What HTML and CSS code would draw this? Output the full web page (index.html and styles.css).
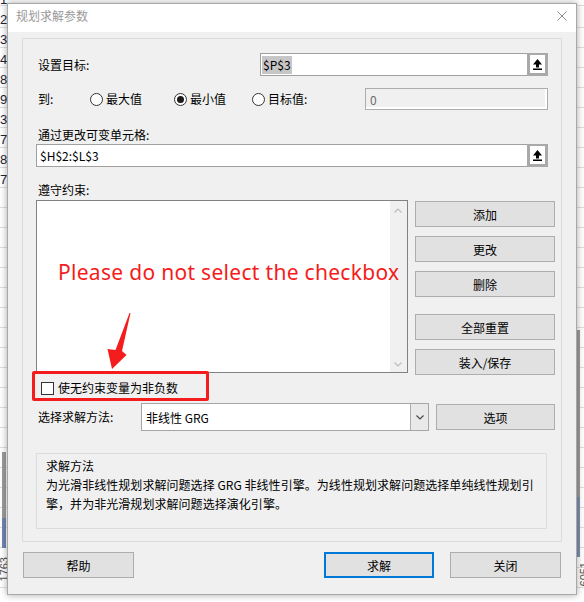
FILE: index.html
```html
<!DOCTYPE html>
<html lang="zh-CN">
<head>
<meta charset="utf-8">
<title>规划求解参数</title>
<link rel="stylesheet" href="styles.css">
</head>
<body>
<div class="desk">
  <div class="rownums">
    <span>1</span><span>2</span><span>3</span><span>4</span><span>8</span><span>9</span><span>3</span><span>7</span><span>8</span><span>7</span>
  </div>
  <div class="edge-bar edge-bar-left"></div>
  <div class="edge-bar edge-bar-right"></div>
  <span class="vnum vnum-left">1763</span>
  <span class="vnum vnum-right">6051</span>

  <section class="dialog">
    <header class="titlebar">
      <span class="title">规划求解参数</span>
      <svg class="close" viewBox="0 0 10 10"><path d="M0.5 0.5L9.5 9.5M9.5 0.5L0.5 9.5"/></svg>
    </header>
    <div class="dlg-body">
      <div class="group">
        <div class="row row-target">
          <span class="lbl lbl-target">设置目标:</span>
          <div class="field field-target">
            <span class="field-text"><span class="sel">$P$3</span></span>
            <span class="ref-btn"><svg class="ref-icon" viewBox="0 0 9 11"><path d="M4.5 0L9 5.5H6V8.5H3V5.5H0Z"/><rect x="0" y="9.5" width="9" height="1.5"/></svg></span>
          </div>
        </div>
        <div class="row row-to">
          <span class="lbl lbl-to">到:</span>
          <span class="radio r1"><span class="radio-dot"></span>最大值</span>
          <span class="radio r2"><span class="radio-dot on"></span>最小值</span>
          <span class="radio r3"><span class="radio-dot"></span>目标值:</span>
          <div class="field field-value">0</div>
        </div>
        <div class="lbl lbl-vars">通过更改可变单元格:</div>
        <div class="field field-vars">
          <span class="field-text field-text-pad">$H$2:$L$3</span>
          <span class="ref-btn"><svg class="ref-icon" viewBox="0 0 9 11"><path d="M4.5 0L9 5.5H6V8.5H3V5.5H0Z"/><rect x="0" y="9.5" width="9" height="1.5"/></svg></span>
        </div>
        <div class="lbl lbl-cons">遵守约束:</div>
        <div class="constraints">
          <div class="listbox">
            <div class="vscroll">
              <svg class="chev" viewBox="0 0 8 5"><path d="M0.5 4.5L4 1L7.5 4.5"/></svg>
              <svg class="chev" viewBox="0 0 8 5"><path d="M0.5 0.5L4 4L7.5 0.5"/></svg>
            </div>
          </div>
          <div class="side-buttons">
            <button class="btn">添加</button>
            <button class="btn gap-s">更改</button>
            <button class="btn gap-s">删除</button>
            <button class="btn gap-l">全部重置</button>
            <button class="btn gap-s">装入/保存</button>
          </div>
        </div>
        <div class="check-row"><span class="checkbox"></span>使无约束变量为非负数</div>
        <div class="row row-method">
          <span class="lbl lbl-method">选择求解方法:</span>
          <div class="select">
            <span class="select-text">非线性 GRG</span>
            <span class="select-arrow"><svg class="chev-dark" viewBox="0 0 8 5"><path d="M0.5 0.5L4 4L7.5 0.5"/></svg></span>
          </div>
          <button class="btn btn-options">选项</button>
        </div>
        <div class="desc">
          <div class="desc-title">求解方法</div>
          <p class="desc-text">为光滑非线性规划求解问题选择 GRG 非线性引擎。为线性规划求解问题选择单纯线性规划引<br>擎，并为非光滑规划求解问题选择演化引擎。</p>
        </div>
      </div>
      <div class="footer">
        <button class="btn btn-foot">帮助</button>
        <button class="btn btn-foot btn-solve">求解</button>
        <button class="btn btn-foot btn-close">关闭</button>
      </div>
    </div>

    <div class="note">Please do not select the checkbox</div>
    <svg class="note-arrow" viewBox="0 0 35 62"><polygon points="30.5,3 22,41 26.5,45 12,59 7.5,39 15.5,40 29.5,3"/></svg>
    <div class="note-box"></div>
  </section>
</div>
</body>
</html>
```

FILE: styles.css
```css
* { box-sizing: border-box; }
html, body { margin: 0; padding: 0; }
body {
  width: 584px;
  height: 602px;
  overflow: hidden;
  background: #fff;
  font-family: "Noto Sans CJK SC", "Noto Sans", sans-serif;
  font-size: 12px;
  color: #000;
}
.desk {
  position: relative;
  width: 584px;
  height: 602px;
  overflow: hidden;
  background: repeating-linear-gradient(to bottom, transparent 0 19px, #dedede 19px 20px);
  background-position: 0 8px;
}
.rownums {
  display: flex;
  flex-direction: column;
  width: 7px;
  margin-top: -10px;
  font-family: "Liberation Sans", sans-serif;
  font-size: 13px;
  color: #1d2535;
  overflow: hidden;
}
.rownums span { height: 20px; line-height: 20px; }

.edge-bar { position: absolute; background: #9c9c9c; }
.edge-bar-left { left: 2px; top: 452px; width: 4px; height: 96px; border-bottom: 30px solid #6f86b0; }
.edge-bar-right { left: 577px; top: 330px; width: 3px; height: 227px; border-bottom: 60px solid #7d8fb0; }
.vnum {
  position: absolute;
  font-family: "Liberation Sans", sans-serif;
  font-size: 11px;
  color: #555;
  writing-mode: vertical-rl;
  transform: rotate(180deg);
}
.vnum-left { left: -2px; top: 557px; }
.vnum-right { left: 578px; top: 562px; }

.dialog {
  position: absolute;
  left: 7px;
  top: 3px;
  width: 570px;
  height: 592px;
  border: 1px solid #a8a8a8;
  background: #f0f0f0;
  box-shadow: 0 0 7px rgba(0, 0, 0, 0.35);
  display: flex;
  flex-direction: column;
}
.titlebar {
  height: 28px;
  flex: none;
  background: #fff;
  display: flex;
  align-items: center;
  padding: 0 9px 4px 8px;
}
.title { color: #999; line-height: 16px; }
.close { margin-left: auto; width: 10px; height: 10px; stroke: #8c8c8c; stroke-width: 1; fill: none; }

.dlg-body { flex: 1; padding: 6px 14px 0 14px; }
.group {
  height: 504px;
  border: 1px solid #dcdcdc;
  padding: 0 6px 0 13px;
  display: flex;
  flex-direction: column;
}
.row { display: flex; align-items: center; }
.lbl { line-height: 16px; white-space: nowrap; padding-left: 2px; }

.row-target { margin-top: 14px; height: 23px; }
.lbl-target { width: 224px; }
.field {
  display: flex;
  background: #fff;
  border: 1px solid #a0a0a0;
  height: 23px;
}
.field-target { width: 288px; }
.field-text { flex: 1; padding-left: 1px; display: flex; align-items: center; white-space: nowrap; }
.field-text-pad { padding-left: 3px; }
.sel { display: inline-block; line-height: 18px; padding: 0 1px; background: #c6c6c6; }
.ref-btn {
  width: 21px;
  margin: -1px -1px -1px 0;
  border: solid #a9a9a9;
  border-width: 2px 3px 3px 3px;
  background: #fff;
  display: flex;
  align-items: center;
  justify-content: center;
}
.ref-icon { width: 9px; height: 11px; fill: #000; }

.row-to { margin-top: 12px; height: 22px; }
.lbl-to { width: 54px; }
.radio { display: flex; align-items: center; gap: 3px; white-space: nowrap; line-height: 16px; }
.r1 { width: 84px; }
.r2 { width: 78px; }
.r3 { width: 113px; }
.radio-dot {
  width: 13px;
  height: 13px;
  border: 1px solid #333;
  border-radius: 50%;
  background: #fff;
  display: flex;
  align-items: center;
  justify-content: center;
}
.radio-dot.on::after {
  content: "";
  width: 7px;
  height: 7px;
  border-radius: 50%;
  background: #1a1a1a;
}
.field-value {
  width: 183px;
  height: 22px;
  background: #f0f0f0;
  border-color: #adadad;
  box-shadow: inset -2px -2px 0 #fff;
  color: #6d6d6d;
  padding-left: 4px;
  align-items: center;
}

.lbl-vars { margin-top: 17px; }
.field-vars { margin-top: 1px; width: 512px; }
.lbl-cons { margin-top: 15px; }

.constraints { margin-top: 2px; display: flex; align-items: flex-start; }
.listbox {
  width: 372px;
  height: 173px;
  border: 1px solid #828282;
  background: #fff;
  display: flex;
  justify-content: flex-end;
}
.vscroll {
  width: 17px;
  background: #f0f0f0;
  display: flex;
  flex-direction: column;
  justify-content: space-between;
  align-items: center;
  padding: 7px 1px 5px 0;
}
.chev { width: 8px; height: 5px; stroke: #bdbdbd; stroke-width: 1.2; fill: none; }
.side-buttons { margin-left: 7px; margin-top: 1px; width: 140px; display: flex; flex-direction: column; }
.btn {
  height: 26px;
  background: #e1e1e1;
  border: 1px solid #adadad;
  font: inherit;
  font-size: 12px;
  color: #000;
  padding: 0;
}
.gap-s { margin-top: 9px; }
.gap-l { margin-top: 17px; }

.check-row {
  margin-top: 5px;
  height: 16px;
  display: flex;
  align-items: center;
  padding-left: 5px;
  gap: 4px;
  line-height: 16px;
}
.checkbox { width: 13px; height: 13px; border: 1px solid #333; background: #fff; }

.row-method { margin-top: 7px; height: 28px; }
.lbl-method { width: 105px; }
.select {
  width: 288px;
  height: 28px;
  border: 1px solid #a6a6a6;
  background: #fff;
  display: flex;
}
.select-text { flex: 1; padding-left: 4px; display: flex; align-items: center; white-space: nowrap; }
.select-arrow {
  width: 18px;
  background: #e9e9e9;
  border-left: 1px solid #adadad;
  display: flex;
  align-items: center;
  justify-content: center;
}
.chev-dark { width: 8px; height: 5px; stroke: #444; stroke-width: 1.1; fill: none; }
.btn-options { margin-left: 7px; width: 119px; }

.desc {
  margin-top: 22px;
  width: 511px;
  height: 76px;
  border: 1px solid #dcdcdc;
  padding: 2px 0 0 9px;
  line-height: 19px;
}
.desc-title { line-height: 19px; }
.desc-text { margin: 0; line-height: 19px; white-space: nowrap; letter-spacing: 0.05px; }

.footer { margin-top: 10px; display: flex; padding: 0 1px; }
.btn-foot { width: 111px; }
.btn-solve { margin-left: auto; width: 110px; border: 2px solid #0078d7; }
.btn-close { margin-left: 16px; }

.note {
  position: absolute;
  left: 50px;
  top: 255px;
  color: #f41c1c;
  font-family: "Noto Sans", sans-serif;
  font-size: 21px;
  line-height: 26px;
  letter-spacing: 0.3px;
  white-space: nowrap;
}
.note-arrow { position: absolute; left: 92px; top: 306px; width: 35px; height: 62px; fill: #f41c1c; }
.note-box {
  position: absolute;
  left: 24px;
  top: 367px;
  width: 177px;
  height: 30px;
  border: 3px solid #f41c1c;
  border-radius: 2px;
}
```
